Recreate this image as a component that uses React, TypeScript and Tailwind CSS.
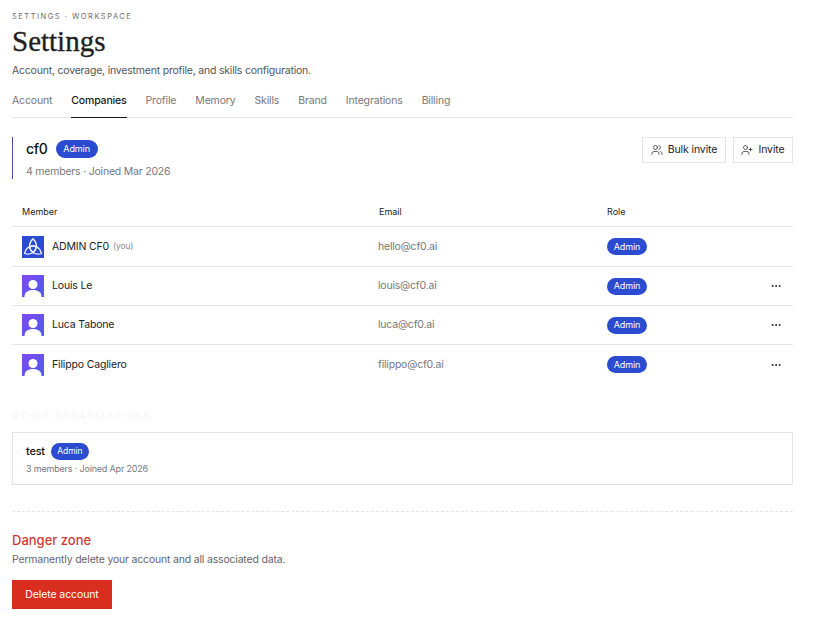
import { Users, UserPlus, MoreHorizontal } from "lucide-react";

const members = [
  { name: "ADMIN CF0", you: true, email: "hello@cf0.ai", h: "h-10" },
  { name: "Louis Le", email: "louis@cf0.ai", h: "h-[39px]" },
  { name: "Luca Tabone", email: "luca@cf0.ai", h: "h-[39px]" },
  { name: "Filippo Cagliero", email: "filippo@cf0.ai", h: "h-[39px]" },
];
const tabs = ["Account", "Companies", "Profile", "Memory", "Skills", "Brand", "Integrations", "Billing"];

function Badge() {
  return (
    <span className="inline-flex h-[17px] w-10 items-center justify-center rounded-full bg-[#2b4bd1] text-[9px] tracking-[-0.01em] text-white">
      Admin
    </span>
  );
}

function OrgLogo() {
  const lobe = "M11 2.8 C6.6 7 6 13 11 16 C16 13 15.4 7 11 2.8 Z";
  return (
    <svg width="22" height="22" viewBox="0 0 22 22" className="shrink-0">
      <rect width="22" height="22" fill="#2b4bd1" />
      <g fill="none" stroke="#eef1fd" strokeWidth="1.25">
        <path d={lobe} />
        <path d={lobe} transform="rotate(120 11 12.6)" />
        <path d={lobe} transform="rotate(240 11 12.6)" />
      </g>
    </svg>
  );
}

function UserAvatar({ id }: { id: string }) {
  return (
    <svg width="22" height="22" viewBox="0 0 22 22" className="shrink-0">
      <defs>
        <linearGradient id={id} x1="0" y1="0" x2="1" y2="1">
          <stop offset="0" stopColor="#8148ee" />
          <stop offset="1" stopColor="#4a5df3" />
        </linearGradient>
      </defs>
      <rect width="22" height="22" fill={`url(#${id})`} />
      <circle cx="11" cy="9.5" r="4.5" fill="#fff" />
      <path d="M2.5 22 C2.5 17 6 15 11 15 C16 15 19.5 17 19.5 22 Z" fill="#fff" />
    </svg>
  );
}

export default function App() {
  return (
    <div className="min-h-[625px] bg-white px-3 pt-3 pr-[22px] font-['Inter',sans-serif] text-[#18181b]">
      <div className="text-[7.5px] leading-[10px] tracking-[0.2em] text-[#6b6b70]">SETTINGS · WORKSPACE</div>
      <h1 className="mt-px font-['Liberation_Serif',serif] text-[29px] leading-[36px] text-[#1f1f22] [-webkit-text-stroke:0.35px_#1f1f22]">Settings</h1>
      <p className="mt-[5px] text-[10.5px] leading-[14px] tracking-[-0.02em] text-[#55555a]">Account, coverage, investment profile, and skills configuration.</p>

      <nav className="mt-[14px] flex h-[26px] gap-[19px] border-b border-[#e4e4e7] tracking-[-0.01em]">
        {tabs.map((t) => (
          <span
            key={t}
            className={`-mb-px h-[26px] text-[10.5px] leading-[18px] ${t === "Companies" ? "border-b border-[#18181b] font-medium text-[#18181b]" : "text-[#77777c]"}`}
          >
            {t}
          </span>
        ))}
      </nav>

      <section className="mt-[19px] flex items-start justify-between">
        <div className="h-[42px] border-l border-[#4a4fb5] pl-[13px] pt-0.5">
          <div className="flex h-5 items-center gap-2">
            <span className="text-sm font-medium leading-5 tracking-[-0.02em] text-[#111]">cf0</span>
            <span className="inline-flex h-[18px] w-[42px] items-center justify-center rounded-full bg-[#2b4bd1] text-[9px] tracking-[-0.01em] text-white">Admin</span>
          </div>
          <div className="mt-1.5 text-[10.5px] leading-[14px] tracking-[-0.02em] text-[#77777c]">4 members · Joined Mar 2026</div>
        </div>
        <div className="flex gap-[7px]">
          <button className="flex h-[26px] w-[84px] items-center justify-center gap-[5px] border border-[#e4e4e7] text-[10.5px] tracking-[-0.01em] text-[#222]">
            <Users size={12} strokeWidth={1.4} />
            Bulk invite
          </button>
          <button className="flex h-[26px] w-[60px] items-center justify-center gap-[5px] border border-[#e4e4e7] text-[10.5px] tracking-[-0.01em] text-[#222]">
            <UserPlus size={12} strokeWidth={1.4} />
            Invite
          </button>
        </div>
      </section>

      <div className="mt-[24px]">
        <div className="grid h-6 grid-cols-[357px_228px_1fr] items-start border-b border-[#e4e4e7] pl-2.5 pt-0.5 text-[9px] leading-[14px] text-[#222]">
          <span>Member</span>
          <span>Email</span>
          <span>Role</span>
        </div>
        {members.map((m, i) => (
          <div
            key={m.name}
            className={`grid ${m.h} grid-cols-[357px_228px_1fr] items-center pl-2.5 ${i < members.length - 1 ? "border-b border-[#e4e4e7]" : ""}`}
          >
            <div className="flex items-center gap-2">
              {m.you ? <OrgLogo /> : <UserAvatar id={`av${i}`} />}
              <span className="text-[10.5px] tracking-[-0.015em] text-[#222]">{m.name}</span>
              {m.you && <span className="-ml-[4px] text-[8.5px] tracking-[-0.02em] text-[#8a8a8f]">(you)</span>}
            </div>
            <span className="-ml-px text-[10.5px] tracking-[-0.02em] text-[#77777c]">{m.email}</span>
            <div className="flex items-center justify-between pr-[11px]">
              <Badge />
              {!m.you && <MoreHorizontal size={12} strokeWidth={2} className="text-[#222]" />}
            </div>
          </div>
        ))}
      </div>

      <div className="mt-[26px] text-[9px] leading-3 tracking-[0.19em] text-[#f3f3f4]">OTHER ORGANIZATIONS</div>

      <div className="mt-[10px] h-[53px] border border-[#e4e4e7] px-[13px] pt-2.5">
        <div className="flex h-[17px] items-center gap-1.5">
          <span className="text-[11px] font-medium tracking-[-0.02em] text-[#111]">test</span>
          <span className="inline-flex h-[17px] w-[38px] items-center justify-center rounded-full bg-[#2b4bd1] text-[8.5px] tracking-[-0.01em] text-white">Admin</span>
        </div>
        <div className="mt-[3px] text-[9px] leading-3 tracking-[-0.02em] text-[#77777c]">3 members · Joined Apr 2026</div>
      </div>

      <div className="mt-[26px] border-t border-dashed border-[#e4e4e7] pt-[19px]">
        <h2 className="text-[13px] font-medium leading-[18px] text-[#cf3b38]">Danger zone</h2>
        <p className="mt-1 text-[10.5px] leading-[14px] tracking-[-0.018em] text-[#66666b]">Permanently delete your account and all associated data.</p>
        <button className="mt-[13px] h-[29px] w-[100px] bg-[#d92d20] text-[10.5px] tracking-[-0.01em] text-white">Delete account</button>
      </div>
    </div>
  );
}
